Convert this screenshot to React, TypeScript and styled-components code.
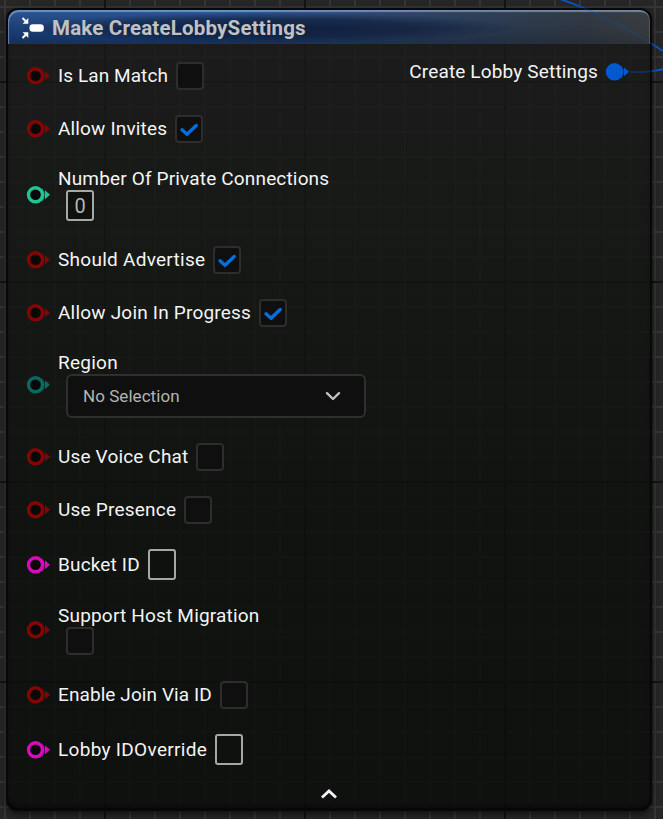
import React from 'react';
import styled, { createGlobalStyle, css } from 'styled-components';

const Global = createGlobalStyle`
  html, body { margin: 0; padding: 0; background: #262626; }
  * { box-sizing: border-box; }
`;

const Canvas = styled.main`
  position: relative;
  width: 663px;
  height: 819px;
  overflow: hidden;
  padding: 8px 11px 8px 6px;
  background-color: #262626;
  background-image:
    linear-gradient(90deg, #131313 2px, transparent 2px),
    linear-gradient(#131313 2px, transparent 2px),
    linear-gradient(90deg, #353535 2px, transparent 2px),
    linear-gradient(#353535 2px, transparent 2px);
  background-size: 200px 200px, 200px 200px, 25px 25px, 25px 25px;
  background-position: 104px 0, 0 81px, 4px 0, 0 6px;
  font-family: Roboto, sans-serif;
`;

const Wires = styled.svg<{ $faint?: boolean }>`
  position: absolute;
  inset: 0;
  pointer-events: none;
  opacity: ${p => (p.$faint ? 0.22 : 1)};
`;

const Node = styled.section`
  position: relative;
  display: flex;
  flex-direction: column;
  height: 803px;
  padding: 2px;
  border-radius: 12px;
  overflow: hidden;
  background: linear-gradient(rgba(25, 25, 25, 0.82) 0, rgba(23, 25, 23, 0.82) 80px, rgba(12, 15, 12, 0.84) 520px, rgba(11, 13, 11, 0.85));
  box-shadow: inset 0 0 0 2px #070807, inset 0 -4px 4px #050605, 0 3px 7px rgba(0, 0, 0, 0.6);
`;

const Header = styled.header`
  display: flex;
  align-items: center;
  flex: none;
  height: 34px;
  padding: 1px 0 0 14px;
  gap: 8px;
  border-radius: 10px 10px 0 0;
  background:
    radial-gradient(ellipse 250px 15px at 260px 18px, rgba(15, 27, 55, 0.9), rgba(15, 27, 55, 0.6) 60%, transparent),
    linear-gradient(90deg, transparent 35%, rgba(50, 53, 56, 0.85) 90%, rgba(58, 60, 62, 0.95)),
    linear-gradient(#2c5590, #1c3f76 55%, #153a70);
  box-shadow:
    inset 1px 2px 1px rgba(165, 195, 230, 0.55),
    inset -1px 0 1px rgba(180, 180, 180, 0.25),
    inset 0 -12px 12px -6px rgba(15, 20, 25, 0.25);
`;

const Title = styled.h1`
  margin: 0;
  color: #c1c1c1;
  font-size: 20.5px;
  line-height: 24px;
  font-weight: 700;
  letter-spacing: 0.19px;
  white-space: nowrap;
`;

const Body = styled.div`
  display: flex;
  justify-content: space-between;
  flex: 1;
  padding-top: 5px;
`;

const Inputs = styled.div`
  display: flex;
  flex-direction: column;
`;

const Row = styled.div<{ $height: number }>`
  display: flex;
  align-items: center;
  height: ${p => p.$height}px;
  padding-left: 18px;
  gap: 8px;
`;

const PinIcon = styled.svg`
  display: block;
  flex: none;
  width: 24px;
  height: 20px;
`;

const Field = styled.div<{ $stacked?: boolean }>`
  display: flex;
  ${p => p.$stacked
    ? css`flex-direction: column; align-items: flex-start;`
    : css`align-items: center;`}
`;

const Label = styled.span<{ $tracking?: number }>`
  color: #f4f4f4;
  font-size: 19px;
  line-height: 22px;
  letter-spacing: ${p => p.$tracking ?? 0.16}px;
  white-space: nowrap;
`;

const Check = styled.span`
  display: flex;
  align-items: center;
  justify-content: center;
  width: 28px;
  height: 28px;
  margin-left: 8px;
  border: 2px solid #2c2d2c;
  border-radius: 4px;
  background: #0f0f0f;
`;

const TextBox = styled.span`
  display: flex;
  align-items: center;
  justify-content: center;
  width: 28px;
  height: 31px;
  margin-left: 8px;
  border: 2px solid #a6a8a6;
  border-radius: 3px;
  background: #0f110f;
  color: #b5b5b5;
  font-size: 20px;
  line-height: 24px;
`;

const Select = styled.div`
  display: flex;
  align-items: center;
  justify-content: space-between;
  width: 300px;
  height: 44px;
  margin-left: 8px;
  padding: 0 23px 0 15px;
  border: 2px solid #2e2f2e;
  border-radius: 6px;
  background: #0f0f0f;
  color: #b4b4b4;
  font-size: 17px;
  letter-spacing: 0.05px;
`;

const Output = styled.div`
  display: flex;
  align-items: center;
  gap: 7px;
  height: 46px;
  padding-right: 21px;
`;

const Collapse = styled.footer`
  display: flex;
  justify-content: center;
  flex: none;
  height: 20px;
  padding: 3px 0 0;
  margin-bottom: 4px;
`;

const colors = { bool: '#850505', int: '#20c594', enumeration: '#076a60', string: '#dc08bd', struct: '#0259d0' };
type PinType = keyof typeof colors;

const Pin = ({ type, filled }: { type: PinType; filled?: boolean }) => (
  <PinIcon viewBox="0 0 24 20">
    <path d="M16 3Q21.5 10 16 17Z" fill={colors[type]} opacity=".6" />
    <circle cx="9.5" cy="9.8" r="7" fill={filled ? colors[type] : '#080808'} stroke={colors[type]} strokeWidth="3.4" />
    <path d="M19 5.3L24 9.8L19 14.3Z" fill={colors[type]} />
  </PinIcon>
);

const WirePaths = () => (
  <>
    <path d="M560 -1Q610 16 663 51" />
    <path d="M630 72Q645 73 664 69" />
  </>
);

type Input = {
  label: string;
  type: PinType;
  height: number;
  control: 'check' | 'text' | 'select';
  stacked?: boolean;
  checked?: boolean;
  value?: string;
  tracking?: number;
};

const inputs: Input[] = [
  { label: 'Is Lan Match', type: 'bool', height: 53, control: 'check', tracking: 0.08 },
  { label: 'Allow Invites', type: 'bool', height: 53, control: 'check' },
  { label: 'Number Of Private Connections', type: 'int', height: 79, control: 'text', value: '0', stacked: true },
  { label: 'Should Advertise', type: 'bool', height: 52, control: 'check', checked: true, tracking: 0.27 },
  { label: 'Allow Join In Progress', type: 'bool', height: 54, control: 'check', checked: true, tracking: 0.2 },
  { label: 'Region', type: 'enumeration', height: 90, control: 'select', value: 'No Selection', stacked: true, tracking: 0.25 },
  { label: 'Use Voice Chat', type: 'bool', height: 54, control: 'check' },
  { label: 'Use Presence', type: 'bool', height: 52, control: 'check', tracking: 0.22 },
  { label: 'Bucket ID', type: 'string', height: 57, control: 'text' },
  { label: 'Support Host Migration', type: 'bool', height: 74, control: 'check', stacked: true, tracking: 0.19 },
  { label: 'Enable Join Via ID', type: 'bool', height: 55, control: 'check', tracking: 0.09 },
  { label: 'Lobby IDOverride', type: 'string', height: 55, control: 'text', tracking: 0.31 },
];
inputs[1].checked = true;

const Control = ({ input }: { input: Input }) => {
  if (input.control === 'text') return <TextBox>{input.value}</TextBox>;
  if (input.control === 'select') {
    return (
      <Select>
        {input.value}
        <svg width="16" height="10" viewBox="0 0 16 10" fill="none" stroke="#c0c0c0" strokeWidth="2.4" strokeLinecap="round" strokeLinejoin="round">
          <path d="M2 2.2L8 8L14 2.2" />
        </svg>
      </Select>
    );
  }
  return (
    <Check>
      {input.checked && (
        <svg width="20" height="16" viewBox="0 0 20 16" fill="none" stroke="#0070e0" strokeWidth="3.4" strokeLinecap="round" strokeLinejoin="round">
          <path d="M3 8.8L8 13.2L17.2 4.5" />
        </svg>
      )}
    </Check>
  );
};

export default function App() {
  return (
    <>
      <Global />
      <Canvas>
        <Wires width="663" height="819" fill="none" stroke="#0b55c4" strokeWidth="1.8">
          <WirePaths />
        </Wires>
        <Node>
          <Header>
            <svg width="22" height="22" viewBox="0 0 22 22" fill="none">
              <path d="M0.5 1L4.5 5M0.5 21L4.5 17" stroke="#fff" strokeWidth="2" />
              <path d="M6.3 1V6.7H0.6ZM6.3 21V15.3H0.6Z" fill="#fff" />
              <rect x="7.5" y="7.3" width="14.3" height="7.4" rx="3.3" fill="#fff" />
            </svg>
            <Title>Make CreateLobbySettings</Title>
          </Header>
          <Body>
            <Inputs>
              {inputs.map(input => (
                <Row key={input.label} $height={input.height}>
                  <Pin type={input.type} />
                  <Field $stacked={input.stacked}>
                    <Label $tracking={input.tracking}>{input.label}</Label>
                    <Control input={input} />
                  </Field>
                </Row>
              ))}
            </Inputs>
            <Output>
              <Label>Create Lobby Settings</Label>
              <Pin type="struct" filled />
            </Output>
          </Body>
          <Collapse>
            <svg width="16" height="12" viewBox="0 0 16 12" fill="none" stroke="#f4f4f4" strokeWidth="2.8">
              <path d="M1 9.5L8 3L15 9.5" />
            </svg>
          </Collapse>
        </Node>
        <Wires $faint width="663" height="819" fill="none" stroke="#0b55c4" strokeWidth="1.8">
          <WirePaths />
        </Wires>
      </Canvas>
    </>
  );
}
